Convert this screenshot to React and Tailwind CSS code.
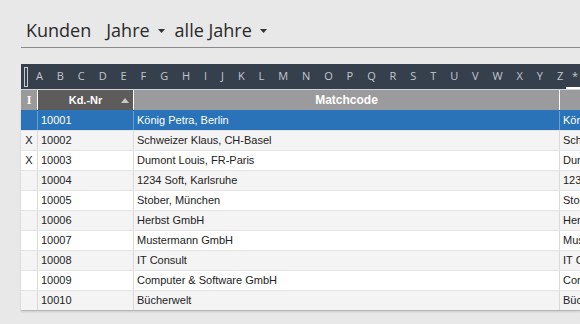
import React from "react";

const rows = [
  ["", "10001", "König Petra, Berlin", "König Petra, Berlin"],
  ["X", "10002", "Schweizer Klaus, CH-Basel", "Schweizer Klaus"],
  ["X", "10003", "Dumont Louis, FR-Paris", "Dumont Louis"],
  ["", "10004", "1234 Soft, Karlsruhe", "1234 Soft"],
  ["", "10005", "Stober, München", "Stober"],
  ["", "10006", "Herbst GmbH", "Herbst GmbH"],
  ["", "10007", "Mustermann GmbH", "Mustermann GmbH"],
  ["", "10008", "IT Consult", "IT Consult"],
  ["", "10009", "Computer & Software GmbH", "Computer & Software"],
  ["", "10010", "Bücherwelt", "Bücherwelt"],
];

const letters = "ABCDEFGHIJKLMNOPQRSTUVWXYZ".split("");

function Caret() {
  return (
    <svg width="7" height="4" viewBox="0 0 7 4" className="ml-[8px] mt-[2px]">
      <path d="M0 0 L7 0 L3.5 4 Z" fill="#333" />
    </svg>
  );
}

export default function App() {
  return (
    <div className="w-[580px] h-[324px] overflow-hidden bg-[#e8e8e8] pl-[21px]" style={{ fontFamily: "'Liberation Sans', Arial, sans-serif" }}>
      <div className="h-[48px] border-b border-[#8a8a8a] flex items-start pt-[17px] pl-[5px] text-[18px] leading-[26px] text-[#2a2a2a]" style={{ fontFamily: "'Open Sans', 'Noto Sans', sans-serif" }}>
        <span>Kunden</span>
        <span className="ml-[15px] flex items-center">Jahre<Caret /></span>
        <span className="ml-[10px] flex items-center">alle Jahre<Caret /></span>
      </div>
      <div className="mt-[16px] h-[26px] bg-[#363f4c] flex items-center border-b border-[#d0d4da] whitespace-nowrap" style={{ fontFamily: "'Open Sans', 'Noto Sans', sans-serif" }}>
        <div className="ml-[3px] w-[4px] h-[20px] border border-[#c8ccd2] shrink-0" />
        <div className="flex items-center gap-[13.9px] ml-[8px] text-[11px] text-[#c3c7ce]">
          {letters.map((l) => (
            <span key={l}>{l}</span>
          ))}
          <span className="relative ml-[-5px]">
            *
            <span className="absolute left-[-6px] right-[-6px] bottom-[-4px] h-[2px] bg-white" />
          </span>
        </div>
      </div>
      <div className="flex h-[20px] text-[11px] font-bold text-white whitespace-nowrap">
        <div className="w-[17px] bg-[#9a9a9a] border-r border-white flex items-center justify-center text-[12px]" style={{ fontFamily: "'Liberation Serif', serif" }}>I</div>
        <div className="w-[96px] bg-[#5e5b5b] border-r border-white flex items-center justify-center relative">
          Kd.-Nr
          <svg width="8" height="5" viewBox="0 0 8 5" className="absolute right-[4px] top-[8px]">
            <path d="M0 5 L8 5 L4 0 Z" fill="#c8c8c8" />
          </svg>
        </div>
        <div className="w-[426px] bg-[#9b9b9d] border-r border-white flex items-center justify-center text-[12px]">Matchcode</div>
        <div className="flex-1 bg-[#9b9b9d]" />
      </div>
      <div className="border-b border-[#b8b8b8] shadow-[0_1px_2px_rgba(0,0,0,0.12)]">
        {rows.map((r, i) => {
          const sel = i === 0;
          const bg = sel ? "bg-[#2b73b8] text-white" : i % 2 === 1 ? "bg-[#f4f4f4] text-[#222]" : "bg-white text-[#222]";
          const sep = sel ? "border-[#6e9fd0]" : "border-[#dadada]";
          return (
            <div key={r[1]} className={`flex h-[20px] text-[11px] whitespace-nowrap border-t ${sel ? "border-[#2b73b8]" : "border-[#e4e4e4]"} ${bg}`}>
              <div className={`w-[17px] border-r ${sep} flex items-center justify-center`}>{r[0]}</div>
              <div className={`w-[96px] border-r ${sep} flex items-center pl-[3px]`}>{r[1]}</div>
              <div className={`w-[426px] border-r ${sep} flex items-center pl-[3px]`}>{r[2]}</div>
              <div className="flex-1 flex items-center pl-[3px] overflow-hidden">{r[3]}</div>
            </div>
          );
        })}
      </div>
    </div>
  );
}
